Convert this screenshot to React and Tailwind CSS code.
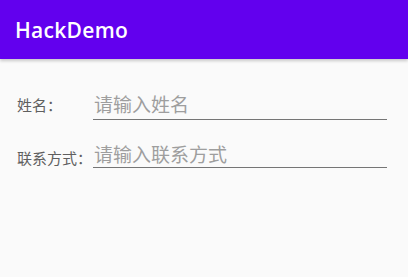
export default function App() {
  return (
    <div className="min-h-screen bg-[#fafafa] font-['Roboto','Noto_Sans_CJK_SC',sans-serif]">
      <header className="flex h-[59px] items-center bg-[#6200ee] pl-[15px] shadow-[0_2px_3px_rgba(0,0,0,0.2)]">
        <h1 className="font-['Open_Sans',sans-serif] text-[21px] leading-[24px] font-semibold tracking-[0.3px] text-white">HackDemo</h1>
      </header>

      <div className="pt-[33px] pl-[17px] pr-[21px] font-['Noto_Sans_CJK_SC',sans-serif]">
        <div className="flex">
          <label className="mt-[3px] w-[76px] shrink-0 text-[15px] leading-[20px] text-[#5f5f5f]">姓名：</label>
          <div className="flex-1 border-b border-[#757575] pb-[3px] pl-[1px] text-[19px] leading-[24px] text-[#9e9e9e]">
            请输入姓名
          </div>
        </div>

        <div className="mt-[22px] flex">
          <label className="mt-[6px] w-[76px] shrink-0 text-[15px] leading-[20px] text-[#5f5f5f]">联系方式：</label>
          <div className="flex-1 border-b border-[#757575] pb-[1px] pl-[1px] text-[19px] leading-[24px] text-[#9e9e9e]">
            请输入联系方式
          </div>
        </div>
      </div>
    </div>
  );
}
